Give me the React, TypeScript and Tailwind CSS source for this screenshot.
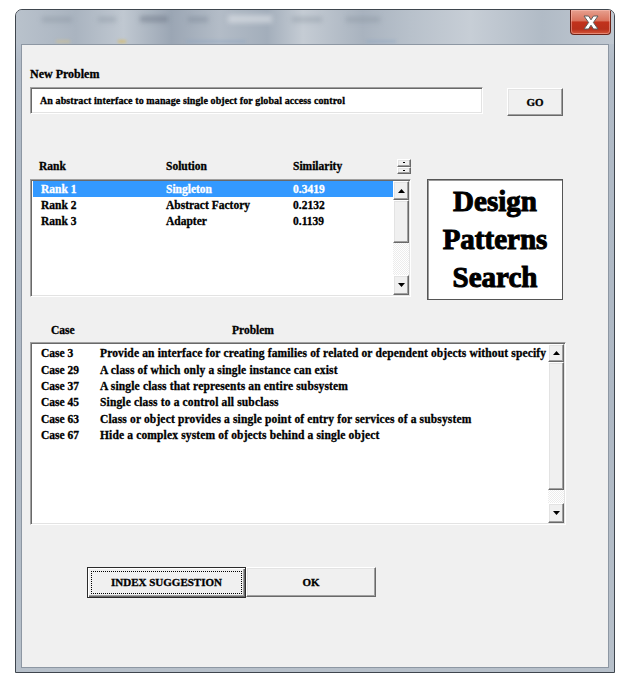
import React from "react";

const raised =
  "border border-t-white border-l-white border-b-[#696969] border-r-[#696969] bg-[#f0f0f0] shadow-[inset_-1px_-1px_0_#a0a0a0,inset_1px_1px_0_#e3e3e3]";
const sunken =
  "border border-t-[#a0a0a0] border-l-[#a0a0a0] border-b-white border-r-white shadow-[inset_1px_1px_0_#696969,inset_-1px_-1px_0_#e3e3e3]";

function Arrow({ down = false }: { down?: boolean }) {
  return (
    <svg width="7" height="4" viewBox="0 0 7 4" className="block">
      {down ? <polygon points="0,0 7,0 3.5,4" fill="#000" /> : <polygon points="0,4 7,4 3.5,0" fill="#000" />}
    </svg>
  );
}

function ScrollBar({ upClass, thumbClass, downClass }: { upClass: string; thumbClass: string; downClass: string }) {
  return (
    <div className="my-[1px] mr-[1px] flex w-[16px] flex-col bg-[repeating-conic-gradient(#ffffff_0_25%,#ececec_0_50%)] bg-[length:2px_2px]">
      <div className={`flex items-center justify-center ${raised} ${upClass}`}>
        <Arrow />
      </div>
      <div className={`${raised} ${thumbClass}`} />
      <div className="flex-1" />
      <div className={`flex items-center justify-center ${raised} ${downClass}`}>
        <Arrow down />
      </div>
    </div>
  );
}

function Spin() {
  return (
    <div className="flex h-[15px] w-[14px] flex-col">
      <div className={`flex flex-1 items-center justify-center ${raised}`}>
        <div className="h-[1px] w-[2px] bg-black" />
      </div>
      <div className={`flex flex-1 items-center justify-center ${raised}`}>
        <div className="h-[1px] w-[2px] bg-black" />
      </div>
    </div>
  );
}

const ranks = [
  { rank: "Rank 1", solution: "Singleton", sim: "0.3419" },
  { rank: "Rank 2", solution: "Abstract Factory", sim: "0.2132" },
  { rank: "Rank 3", solution: "Adapter", sim: "0.1139" },
];

const cases = [
  { id: "Case 3", text: "Provide an interface for creating families of related or dependent objects without specify" },
  { id: "Case 29", text: "A class of which only a single instance can exist" },
  { id: "Case 37", text: "A single class that represents an entire subsystem" },
  { id: "Case 45", text: "Single class to a control all subclass" },
  { id: "Case 63", text: "Class or object provides a single point of entry for services of a subsystem" },
  { id: "Case 67", text: "Hide a complex system of objects behind a single object" },
];

function CloseButton() {
  return (
    <div className="mr-[3px] flex h-[25px] w-[41px] items-center justify-center rounded-b-[4px] border border-t-0 border-[#6b2318] bg-[linear-gradient(180deg,#e7a08f_0%,#d9725c_45%,#c1321c_50%,#b8301b_80%,#d5583c_100%)] shadow-[inset_0_0_0_1px_rgba(255,200,190,0.45)]">
      <svg width="16" height="15" viewBox="0 0 16 15">
        <polygon
          points="1,1 5.5,1 8,4.8 10.5,1 15,1 10.4,7.5 15,14 10.5,14 8,10.2 5.5,14 1,14 5.6,7.5"
          fill="#ffffff"
          stroke="#5d5d5d"
          strokeWidth="1"
          strokeLinejoin="round"
        />
      </svg>
    </div>
  );
}

export default function App() {
  return (
    <div className="h-[675px] w-[617px] overflow-hidden bg-white font-['Liberation_Serif','DejaVu_Serif',serif] text-black [-webkit-text-stroke:0.3px_currentColor]">
      <div className="ml-[15px] mt-[9px] flex h-[664px] w-[600px] flex-col rounded-t-[7px] border border-[#3f464e] bg-[linear-gradient(180deg,#c4ccd6_0%,#b1bbc7_8%,#aeb8c4_60%,#b7c0ca_100%)]">
        {/* title bar with the blurred glass behind it */}
        <div className="flex h-[34px] items-start overflow-hidden rounded-t-[6px] bg-[linear-gradient(90deg,#b9c2cc_0%,#aab4c0_10%,#c0c8d1_18%,#9ba6b4_26%,#b3bcc7_34%,#a3aebb_42%,#c5ccd4_48%,#a9b3bf_58%,#b8c1cb_66%,#c7ced6_76%,#b1bbc6_88%,#c0c8d1_100%)]">
          <div className="flex h-full flex-1 flex-col overflow-hidden">
            <div className="mt-[5px] flex h-[8px] items-center blur-[2.5px]">
              <div className="ml-[26px] h-[5px] w-[30px] bg-[#7f8b99]/40" />
              <div className="ml-[26px] h-[5px] w-[18px] bg-[#7f8b99]/40" />
              <div className="ml-[24px] h-[6px] w-[28px] bg-[#5f6b7a]/45" />
              <div className="ml-[20px] h-[5px] w-[20px] bg-[#6f7b8a]/40" />
              <div className="ml-[20px] h-[8px] w-[44px] bg-[#dfe3e8]/60" />
              <div className="ml-[20px] h-[5px] w-[30px] bg-[#7f8b99]/40" />
              <div className="ml-[24px] h-[5px] w-[34px] bg-[#7f8b99]/40" />
            </div>
            <div className="mt-[16px] flex h-[4px] items-center blur-[1.5px]">
              <div className="ml-[40px] h-[3px] w-[14px] bg-[#d8c48a]/50" />
              <div className="ml-[48px] h-[3px] w-[8px] bg-[#e0b84a]/60" />
              <div className="ml-[60px] h-[3px] w-[60px] bg-[#8da4c2]/40" />
              <div className="ml-[120px] h-[3px] w-[30px] bg-[#8da4c2]/40" />
            </div>
          </div>
          <CloseButton />
        </div>

        {/* client area */}
        <div className="mx-[5px] flex flex-1 flex-col border border-[#8d97a3] bg-[#f0f0f0] pl-[8px]">
          <p className="mt-[22px] h-[14px] text-[12px] font-bold leading-[14px]">New Problem</p>

          <div className="mt-[6px] flex items-start">
            <div className={`flex h-[27px] w-[453px] items-center bg-white pl-[9px] text-[10px] font-bold tracking-[0.1px] ${sunken}`}>
              An abstract interface to manage single object for global access control
            </div>
            <div className={`ml-[24px] mt-[1px] flex h-[28px] w-[56px] items-center justify-center text-[11px] font-bold ${raised}`}>
              GO
            </div>
          </div>

          <div className="mt-[43px] flex h-[15px] items-center text-[11.5px] font-bold leading-[15px]">
            <span className="w-[136px] pl-[9px]">Rank</span>
            <span className="w-[127px]">Solution</span>
            <span className="w-[104px]">Similarity</span>
            <Spin />
          </div>

          <div className="mt-[5px] flex items-start gap-[16px]">
            <div className={`flex h-[118px] w-[381px] bg-white ${sunken}`}>
              <div className="flex-1 pl-[2px] pt-[1px]">
                {ranks.map((r, i) => (
                  <div
                    key={r.rank}
                    className={`flex h-[16px] items-center text-[11.5px] font-bold leading-[16px] ${i === 0 ? "bg-[#3399ff] text-white" : ""}`}
                  >
                    <span className="w-[133px] pl-[8px]">{r.rank}</span>
                    <span className="w-[127px]">{r.solution}</span>
                    <span>{r.sim}</span>
                  </div>
                ))}
              </div>
              <ScrollBar upClass="h-[19px]" thumbClass="h-[43px]" downClass="h-[20px]" />
            </div>

            <div className="flex h-[121px] w-[136px] flex-col items-center justify-center border border-[#555] bg-white pb-[2px] text-[29px] font-bold leading-[38px] shadow-[inset_1px_1px_0_#9a9a9a] [-webkit-text-stroke:1px_currentColor]">
              <span>Design</span>
              <span>Patterns</span>
              <span>Search</span>
            </div>
          </div>

          <div className="mt-[23px] flex h-[14px] items-center text-[11.5px] font-bold leading-[14px]">
            <span className="w-[202px] pl-[21px]">Case</span>
            <span>Problem</span>
          </div>

          <div className={`mt-[5px] flex h-[183px] w-[536px] bg-white ${sunken}`}>
            <div className="min-w-0 flex-1 pl-[10px] pt-[2px]">
              {cases.map((c) => (
                <div key={c.id} className="flex h-[16.4px] items-center whitespace-nowrap text-[11.5px] font-bold leading-[16px]">
                  <span className="w-[59px] shrink-0">{c.id}</span>
                  <span className="tracking-[0.15px]">{c.text}</span>
                </div>
              ))}
            </div>
            <ScrollBar upClass="h-[18px]" thumbClass="h-[128px]" downClass="h-[20px]" />
          </div>

          <div className="ml-[57px] mt-[42px] flex items-start">
            <div className="flex h-[31px] w-[159px] border border-[#2b2b2b] bg-[#f0f0f0] p-[3px] shadow-[inset_1px_1px_0_#ffffff,inset_-1px_-1px_0_#696969,inset_-2px_-2px_0_#a0a0a0]">
              <div className="flex flex-1 items-center justify-center border border-dotted border-black text-[11px] font-bold">
                INDEX SUGGESTION
              </div>
            </div>
            <div className={`flex h-[30px] w-[130px] items-center justify-center text-[11px] font-bold ${raised}`}>OK</div>
          </div>
        </div>
        <div className="h-[4px]" />
      </div>
    </div>
  );
}
